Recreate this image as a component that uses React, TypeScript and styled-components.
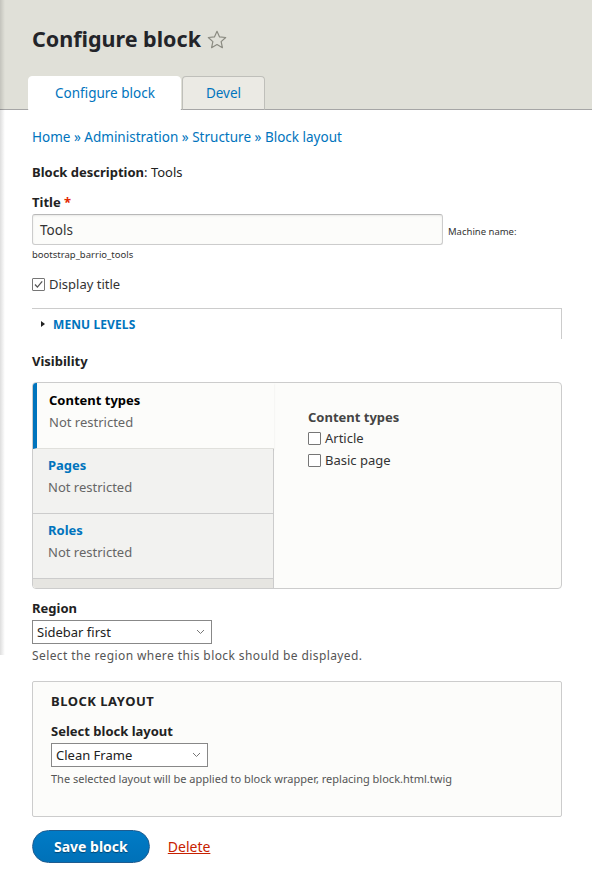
import React from 'react';
import styled, {createGlobalStyle} from "styled-components";

const GlobalStyle = createGlobalStyle`
  html, body {
    margin: 0;
    padding: 0;
    background: #ffffff;
  }
  body {
    font-family: "Noto Sans", "Open Sans", sans-serif;
    color: #333333;
    font-size: 13px;
  }
  * {
    box-sizing: border-box;
  }
`

const vtabItems = [
    {title: "Content types", summary: "Not restricted", active: true},
    {title: "Pages", summary: "Not restricted", active: false},
    {title: "Roles", summary: "Not restricted", active: false}
]

const crumbs = ["Home", "Administration", "Structure", "Block layout"]

const Star = () => (
    <svg width="22" height="22" viewBox="0 0 24 24">
        <path d="M12 2.5l2.8 6.1 6.7.7-5 4.5 1.4 6.6L12 17l-5.9 3.4 1.4-6.6-5-4.5 6.7-.7z"
              fill="none" stroke="#8a8a80" strokeWidth="1.3" strokeLinejoin="round"/>
    </svg>
)

const Chevron = () => (
    <svg width="9" height="6" viewBox="0 0 9 6">
        <path d="M1 1l3.5 3.5L8 1" fill="none" stroke="#777" strokeWidth="1"/>
    </svg>
)

const Check = ({checked}: { checked?: boolean }) => (
    <CheckBox>
        {checked && (
            <svg width="11" height="11" viewBox="0 0 11 11">
                <path d="M2 5.5l2.4 2.6L9.2 2.4" fill="none" stroke="#555" strokeWidth="1.3"/>
            </svg>
        )}
    </CheckBox>
)

export default function App() {
    return (
        <>
            <GlobalStyle/>
            <EdgeShadow/>
            <Header>
                <PageTitle>Configure block <Star/></PageTitle>
                <Tabs>
                    <Tab active>Configure block</Tab>
                    <Tab>Devel</Tab>
                </Tabs>
            </Header>
            <Main>
                <Breadcrumb>
                    {crumbs.map((c, i) => (
                        <React.Fragment key={c}>
                            {i > 0 && <Sep> » </Sep>}
                            <Link>{c}</Link>
                        </React.Fragment>
                    ))}
                </Breadcrumb>

                <DescLine><b>Block description</b>: Tools</DescLine>

                <FormItem>
                    <Label>Title <Req>*</Req></Label>
                    <InputRow>
                        <TextInput>Tools</TextInput>
                        <MachineName>Machine name:</MachineName>
                    </InputRow>
                    <SmallText>bootstrap_barrio_tools</SmallText>
                </FormItem>

                <CheckRow>
                    <Check checked/>
                    <span>Display title</span>
                </CheckRow>

                <Details>
                    <Summary>
                        <Triangle/>
                        MENU LEVELS
                    </Summary>
                </Details>

                <SectionLabel>Visibility</SectionLabel>
                <VerticalTabs>
                    <TabMenu>
                        {vtabItems.map(item => (
                            <MenuItem key={item.title} active={item.active}>
                                <MenuTitle active={item.active}>{item.title}</MenuTitle>
                                <MenuSummary>{item.summary}</MenuSummary>
                            </MenuItem>
                        ))}
                        <MenuFiller/>
                    </TabMenu>
                    <TabPane>
                        <PaneTitle>Content types</PaneTitle>
                        <CheckRow tight>
                            <Check/>
                            <span>Article</span>
                        </CheckRow>
                        <CheckRow tight>
                            <Check/>
                            <span>Basic page</span>
                        </CheckRow>
                    </TabPane>
                </VerticalTabs>

                <FormItem>
                    <Label>Region</Label>
                    <Select width={180}>
                        <span>Sidebar first</span>
                        <Chevron/>
                    </Select>
                    <Description wide>Select the region where this block should be displayed.</Description>
                </FormItem>

                <Fieldset>
                    <Legend>BLOCK LAYOUT</Legend>
                    <Label>Select block layout</Label>
                    <Select width={157}>
                        <span>Clean Frame</span>
                        <Chevron/>
                    </Select>
                    <Description>The selected layout will be applied to block wrapper, replacing block.html.twig</Description>
                </Fieldset>

                <Actions>
                    <PrimaryButton>Save block</PrimaryButton>
                    <DeleteLink>Delete</DeleteLink>
                </Actions>
            </Main>
        </>
    );
}

const EdgeShadow = styled.div`
  position: absolute;
  left: 0;
  top: 0;
  width: 5px;
  height: 655px;
  background: linear-gradient(90deg, rgba(0, 0, 0, 0.13), rgba(0, 0, 0, 0));
  pointer-events: none;
  z-index: 2;
`

const Header = styled.header`
  background: #e0e0d8;
  border-bottom: 1px solid #a6a6a6;
  padding: 24px 0 0 28px;
`

const PageTitle = styled.h1`
  margin: 0 0 0 4px;
  font-family: "Noto Sans", sans-serif;
  font-size: 21.5px;
  font-weight: 700;
  color: #232429;
  display: flex;
  align-items: center;
  gap: 5px;
  line-height: 30px;

  svg {
    margin-top: 1px;
  }
`

const Tabs = styled.div`
  display: flex;
  margin-top: 22px;
  margin-bottom: -1px;
`

const Tab = styled.div<{ active?: boolean }>`
  height: 34px;
  padding: ${p => p.active ? "0 25px 0 26px" : "0 23px"};
  display: flex;
  align-items: center;
  font-size: 13.5px;
  color: #0074bd;
  background: ${p => p.active ? "#ffffff" : "#ebeae4"};
  border: 1px solid ${p => p.active ? "#ffffff" : "#bfbfba"};
  border-bottom: ${p => p.active ? "1px solid #ffffff" : "1px solid #a6a6a6"};
  border-radius: 4px 4px 0 0;
  margin-right: 1px;
`

const Main = styled.main`
  padding: 17px 30px 30px 32px;
`

const Breadcrumb = styled.nav`
  font-size: 13.5px;
  line-height: 20px;
  color: #0074bd;
`

const Link = styled.span`
  color: #0074bd;
`

const Sep = styled.span`
  color: #0074bd;
`

const DescLine = styled.div`
  margin: 15px 0 11px;
  font-size: 13px;
  line-height: 20px;
  color: #222;

  b {
    font-weight: 700;
  }
`

const FormItem = styled.div`
  margin-top: 10px;
`

const Label = styled.div`
  font-weight: 700;
  font-size: 13px;
  line-height: 18px;
  color: #222;
  margin-bottom: 3px;
`

const Req = styled.span`
  color: #e32700;
`

const InputRow = styled.div`
  display: flex;
  align-items: center;
  gap: 5px;
`

const TextInput = styled.div`
  width: 411px;
  height: 31px;
  padding: 0 7px;
  display: flex;
  align-items: center;
  background: #fcfcfa;
  border: 1px solid #ccc;
  border-top-color: #b8b8b8;
  border-radius: 3px;
  box-shadow: inset 0 1px 2px rgba(0, 0, 0, 0.08);
  font-size: 13.5px;
  color: #333;
`

const MachineName = styled.span`
  font-size: 9.5px;
  color: #333;
  margin-top: 3px;
`

const SmallText = styled.div`
  font-size: 9.5px;
  line-height: 14px;
  margin-top: 3px;
  color: #333;
`

const CheckRow = styled.label<{ tight?: boolean }>`
  display: flex;
  align-items: center;
  gap: 4px;
  font-size: 13px;
  color: #333;
  margin-top: ${p => p.tight ? "2px" : "12px"};
  line-height: 20px;
`

const CheckBox = styled.span`
  width: 13px;
  height: 13px;
  border: 1px solid #767676;
  border-radius: 1px;
  background: #fff;
  display: inline-flex;
  align-items: center;
  justify-content: center;
  flex-shrink: 0;
`

const Details = styled.div`
  margin-top: 14px;
  border-top: 1px solid #ccc;
  border-right: 1px solid #ccc;
  height: 31px;
`

const Summary = styled.div`
  display: flex;
  align-items: center;
  gap: 8px;
  height: 30px;
  padding-left: 9px;
  font-size: 12px;
  font-weight: 700;
  color: #0074bd;
  letter-spacing: 0.1px;
`

const Triangle = styled.span`
  width: 0;
  height: 0;
  border-top: 3.5px solid transparent;
  border-bottom: 3.5px solid transparent;
  border-left: 4px solid #222;
`

const SectionLabel = styled.div`
  font-weight: 700;
  font-size: 13px;
  color: #222;
  margin-top: 12px;
  line-height: 20px;
`

const VerticalTabs = styled.div`
  margin-top: 11px;
  display: flex;
  border: 1px solid #ccc;
  border-radius: 4px;
  background: #fcfcfa;
  height: 207px;
  overflow: hidden;
`

const TabMenu = styled.div`
  width: 241px;
  display: flex;
  flex-direction: column;
  background: #f2f2f0;
  border-right: 1px solid #ccc;
`

const MenuItem = styled.div<{ active?: boolean }>`
  height: ${p => p.active ? "66px" : "65px"};
  padding: ${p => p.active ? "8px" : "7px"} 14px 0 ${p => p.active ? "12px" : "15px"};
  background: ${p => p.active ? "#fcfcfa" : "#f2f2f0"};
  border-left: ${p => p.active ? "4px solid #0074bd" : "none"};
  border-bottom: 1px solid ${p => p.active ? "#e0e0dc" : "#ccc"};
  margin-right: ${p => p.active ? "-1px" : "0"};
  box-shadow: ${p => p.active ? "0 1px 2px rgba(0,0,0,0.08)" : "none"};
  position: relative;
`

const MenuTitle = styled.div<{ active?: boolean }>`
  font-weight: 700;
  font-size: 13px;
  line-height: 18px;
  color: ${p => p.active ? "#000" : "#0074bd"};
`

const MenuSummary = styled.div`
  font-size: 13px;
  line-height: 20px;
  margin-top: 3px;
  color: #666;
`

const MenuFiller = styled.div`
  flex: 1;
  background: #e6e5e1;
`

const TabPane = styled.div`
  flex: 1;
  padding: 25px 34px;
`

const PaneTitle = styled.div`
  font-weight: 700;
  font-size: 13px;
  color: #444;
  line-height: 18px;
`

const Select = styled.div<{ width: number }>`
  width: ${p => p.width}px;
  height: 24px;
  border: 1px solid #888;
  background: #fff;
  display: flex;
  align-items: center;
  justify-content: space-between;
  padding: 0 6px 0 4px;
  font-size: 13px;
  color: #222;
`

const Description = styled.div<{ wide?: boolean }>`
  font-size: ${p => p.wide ? "12px" : "11px"};
  color: #555;
  margin-top: 4px;
  line-height: 16px;
  letter-spacing: ${p => p.wide ? "0.4px" : "0"};
`

const Fieldset = styled.div`
  margin-top: 17px;
  border: 1px solid #ccc;
  border-radius: 2px;
  background: #fcfcfa;
  padding: 10px 18px 28px 18px;
  height: 136px;
`

const Legend = styled.div`
  font-size: 13px;
  font-weight: 700;
  color: #222;
  letter-spacing: 0.5px;
  line-height: 18px;
  margin-bottom: 12px;
`

const Actions = styled.div`
  display: flex;
  align-items: center;
  gap: 18px;
  margin-top: 13px;
`

const PrimaryButton = styled.button`
  height: 33px;
  padding: 0 21px;
  border-radius: 20px;
  border: 1px solid #1e5c90;
  background: linear-gradient(#007bc6, #0071b8);
  color: #fff;
  font-family: "Noto Sans", sans-serif;
  font-weight: 700;
  font-size: 14px;
  text-shadow: 0 1px 1px rgba(0, 0, 0, 0.4);
`

const DeleteLink = styled.a`
  font-size: 14px;
  color: #c72100;
  text-decoration: underline;
`
